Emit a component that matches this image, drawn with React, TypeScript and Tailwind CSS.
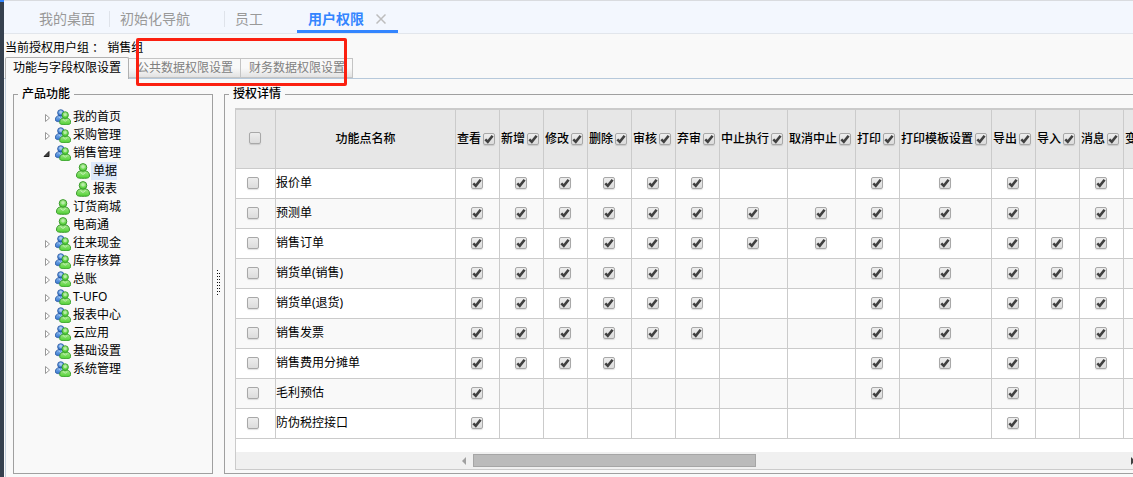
import { useState } from "react";

type TreeNode = {
  title: string;
  kind: "group" | "single";
  open?: boolean;
  children?: TreeNode[];
};

type Row = {
  name: string;
  // one char per column: 1 - checked, 0 - no such permission
  rights: string;
};

const TABS = ["我的桌面", "初始化导航", "员工", "用户权限"];

const SETTINGS = ["功能与字段权限设置", "公共数据权限设置", "财务数据权限设置"];

const TREE: TreeNode[] = [
  { title: "我的首页", kind: "group" },
  { title: "采购管理", kind: "group" },
  {
    title: "销售管理",
    kind: "group",
    open: true,
    children: [
      { title: "单据", kind: "single" },
      { title: "报表", kind: "single" },
    ],
  },
  { title: "订货商城", kind: "single" },
  { title: "电商通", kind: "single" },
  { title: "往来现金", kind: "group" },
  { title: "库存核算", kind: "group" },
  { title: "总账", kind: "group" },
  { title: "T-UFO", kind: "group" },
  { title: "报表中心", kind: "group" },
  { title: "云应用", kind: "group" },
  { title: "基础设置", kind: "group" },
  { title: "系统管理", kind: "group" },
];

const COLUMNS = [
  { title: "查看", width: "w-11" },
  { title: "新增", width: "w-11" },
  { title: "修改", width: "w-11" },
  { title: "删除", width: "w-11" },
  { title: "审核", width: "w-11" },
  { title: "弃审", width: "w-11" },
  { title: "中止执行", width: "w-17" },
  { title: "取消中止", width: "w-17" },
  { title: "打印", width: "w-11" },
  { title: "打印模板设置", width: "w-23" },
  { title: "导出", width: "w-11" },
  { title: "导入", width: "w-11" },
  { title: "消息", width: "w-11" },
  { title: "变更", width: "w-11" },
];

const ROWS: Row[] = [
  { name: "报价单", rights: "11111100111010" },
  { name: "预测单", rights: "11111111111010" },
  { name: "销售订单", rights: "11111111111110" },
  { name: "销货单(销售)", rights: "11111100111110" },
  { name: "销货单(退货)", rights: "11111100111110" },
  { name: "销售发票", rights: "11111100111010" },
  { name: "销售费用分摊单", rights: "11110000111010" },
  { name: "毛利预估", rights: "10000000101000" },
  { name: "防伪税控接口", rights: "10000000001000" },
];

function Check({ label, on = false }: { label: string; on?: boolean }) {
  return (
    <span className="relative block size-3 shrink-0">
      <input
        type="checkbox"
        aria-label={label}
        defaultChecked={on}
        className="peer block size-3 appearance-none rounded-xs border border-[#a8a8a8] bg-linear-to-b from-[#ededed] to-[#dcdcdc] shadow-[0_1px_1px_#00000020]"
      />
      <svg viewBox="0 0 12 12" className="pointer-events-none absolute inset-0 hidden size-3 peer-checked:block">
        <path d="M2.300 6.300 4.800 8.800 9.600 2.700" fill="none" stroke="#404040" strokeWidth="2.600" />
      </svg>
    </span>
  );
}

function PersonShape({ fill, line }: { fill: string; line: string }) {
  return (
    <g fill={fill} stroke={line} strokeWidth="1">
      <path d="M.5 13C.4 9.600 2.200 8.200 5 7.800h4c2.800.4 4.600 1.800 4.500 5.200-.1 1.800-1.500 2.300-6.500 2.300S.6 14.800.5 13Z" />
      <circle cx="7" cy="4.400" r="3.800" />
      <circle cx="7" cy="4" r="1.800" fill="#ffffff" fillOpacity=".45" stroke="none" />
      <path d="M4.500 9.500 7 11.500 9.500 9.500" fill="none" stroke="#ffffff" strokeOpacity=".55" />
    </g>
  );
}

function NodeIcon({ kind }: { kind: TreeNode["kind"] }) {
  if (kind === "single") {
    return (
      <svg viewBox="0 0 16 16" className="size-4 shrink-0">
        <g transform="translate(1 0)">
          <PersonShape fill="url(#green)" line="#3a9a2c" />
        </g>
      </svg>
    );
  }
  return (
    <svg viewBox="0 0 16 16" className="size-4 shrink-0">
      <g transform="translate(0 .2) scale(.82)">
        <PersonShape fill="url(#blue)" line="#1f4f9c" />
      </g>
      <g transform="translate(4.300 2.200) scale(.84 .88)">
        <PersonShape fill="url(#green)" line="#2f9a24" />
      </g>
    </svg>
  );
}

function Arrow({ open }: { open?: boolean }) {
  return (
    <svg viewBox="0 0 8 10" className="mt-0.5 h-2.5 w-2 shrink-0">
      {open ? (
        <path d="M6 2.500v5H1Z" fill="#444444" stroke="#222222" />
      ) : (
        <path d="M2.500 1.500v7l4-3.500Z" fill="#ffffff" stroke="#989898" />
      )}
    </svg>
  );
}

function Tree({ nodes, selected, onSelect }: { nodes: TreeNode[]; selected: string; onSelect: (t: string) => void }) {
  return (
    <ul>
      {nodes.map((n) => (
        <li key={n.title}>
          <div className="flex h-4.5 items-center">
            <span className="mr-1 flex w-2">{n.kind === "group" && <Arrow open={n.open} />}</span>
            <NodeIcon kind={n.kind} />
            <button
              onClick={() => onSelect(n.title)}
              className={selected === n.title ? "h-4.5 bg-[#dbe8fb] pl-0.5" : "h-4.5 pl-0.5"}
            >
              {n.title}
            </button>
          </div>
          {n.children && (
            <div className="pl-5">
              <Tree nodes={n.children} selected={selected} onSelect={onSelect} />
            </div>
          )}
        </li>
      ))}
    </ul>
  );
}

export default function App() {
  const [selected, setSelected] = useState("单据");
  const [setting, setSetting] = useState(SETTINGS[0]);

  return (
    <div className="flex min-h-screen overflow-hidden bg-[#f9f9f9] font-['Noto_Sans','Noto_Sans_CJK_SC',sans-serif] text-xs leading-[18px] text-black">
      {/* shared gradients for tree icons */}
      <svg className="absolute size-0">
        <defs>
          <linearGradient id="green" x1="0" y1="0" x2="0" y2="1">
            <stop offset="0" stopColor="#a5e88c" />
            <stop offset="1" stopColor="#4fd032" />
          </linearGradient>
          <linearGradient id="blue" x1="0" y1="0" x2="0" y2="1">
            <stop offset="0" stopColor="#8dbcf0" />
            <stop offset="1" stopColor="#2f72cc" />
          </linearGradient>
        </defs>
      </svg>

      <aside className="w-1 shrink-0 border-t-2 border-[#3385ff] bg-[#36414f]" />

      <div className="flex min-w-0 flex-1 flex-col">
        <nav className="flex h-[34px] shrink-0 items-end border-t border-b border-t-[#d9dbdf] border-b-[#e2e6ec] bg-[#f3f7fe] pl-6 text-sm text-[#999999]">
          {TABS.map((t, i) => {
            const active = t === "用户权限";
            return (
              <div
                key={t}
                className={
                  active
                    ? "flex h-7 items-center border-b-3 border-[#3385ff] pt-0.5 pr-3 pl-[11px] font-bold text-[#3385ff]"
                    : "flex h-7 items-center pb-px"
                }
              >
                {i > 0 && !active && <span className="h-4 w-px bg-[#dfe3ea]" />}
                <a href="#" className={active ? "" : i === 0 ? "pr-3.5 pl-[11px]" : "pr-8.5 pl-2.5"}>{t}</a>
                {active && (
                  <button aria-label="关闭" className="ml-3">
                    <svg viewBox="0 0 10 10" className="size-2.5">
                      <path d="M.5.5l9 9M9.500.5l-9 9" stroke="#bdbdbd" strokeWidth="1.500" />
                    </svg>
                  </button>
                )}
              </div>
            );
          })}
        </nav>

        <p className="flex h-[23px] shrink-0 gap-[3px] pt-[5px] pl-px">
          <span>当前授权用户组 ：</span>
          <span>销售组</span>
        </p>

        <div className="relative flex h-[22px] shrink-0 items-end border-b border-[#b7c9db] pl-px">
          {SETTINGS.map((s) => (
            <button
              key={s}
              onClick={() => setSetting(s)}
              className={
                s === setting
                  ? "-mb-px h-[22px] rounded-t-xs border border-b-0 border-[#b0b0b0] bg-[#f9f9f9] px-[7px] pb-0.5"
                  : "h-5 border border-l-0 border-[#c4c4c4] bg-linear-to-b from-[#f9f9f9] from-50% to-[#e2e2e2] pr-[7px] pl-2 text-[#808080]"
              }
            >
              {s}
            </button>
          ))}
          {/* marker over the data permission tabs */}
          <div className="pointer-events-none absolute -top-[19px] left-[132px] h-12 w-[211px] rounded-xs border-3 border-[#fb2010]" />
        </div>

        <main className="ml-px flex flex-1 border-l border-[#c3d0de] pt-1.5 pb-[3px] pl-[7px]">
          <fieldset className="w-[200px] shrink-0 border border-[#a0a0a0] pt-[5px] pl-[29px]">
            <legend className="-ml-[25px] px-1 font-medium">产品功能</legend>
            <Tree nodes={TREE} selected={selected} onSelect={setSelected} />
          </fieldset>

          <div className="flex w-[11px] shrink-0 items-center justify-center pt-1.5">
            <svg viewBox="0 0 3 25" className="h-[25px] w-[3px]" shapeRendering="crispEdges">
              <path d="M.5 0v25" stroke="#111111" strokeDasharray="1 2" />
              <path d="M2.500 3v20" stroke="#111111" strokeDasharray="1 2" />
            </svg>
          </div>

          <fieldset className="min-w-0 flex-1 border border-r-0 border-[#a0a0a0] pt-[5px] pb-[3px] pl-2.5">
            <legend className="-ml-1.5 px-1 font-medium">授权详情</legend>
            <div className="overflow-hidden border-t-2 border-b border-l border-[#cbcbcb] bg-white">
              <table className="w-max table-fixed border-separate border-spacing-0">
                <thead>
                  <tr className="h-[59px] bg-[#e7e7e7]">
                    <th className="w-10 border-r border-b border-[#cbcbcb] p-0 pb-0.5">
                      <div className="flex justify-center pr-0.5">
                        <Check label="全选" />
                      </div>
                    </th>
                    <th className="w-45 border-r border-b border-[#cbcbcb] p-0 font-medium">功能点名称</th>
                    {COLUMNS.map((c) => (
                      <th key={c.title} className={`${c.width} border-r border-b border-[#cbcbcb] p-0 font-medium`}>
                        <div className="flex items-center gap-0.5 pl-px whitespace-nowrap">
                          {c.title}
                          <Check label={c.title} on />
                        </div>
                      </th>
                    ))}
                  </tr>
                </thead>
                <tbody>
                  {ROWS.map((r) => (
                    <tr key={r.name} className="h-7.5 even:bg-[#f9f9f9]">
                      <td className="border-r border-b border-[#cbcbcb] p-0 pb-0.5">
                        <div className="flex justify-center pr-1.5">
                          <Check label={r.name} />
                        </div>
                      </td>
                      <td className="border-r border-b border-[#cbcbcb] p-0 pb-0.5">{r.name}</td>
                      {COLUMNS.map((c, i) => (
                        <td key={c.title} className="border-r border-b border-[#cbcbcb] p-0 pb-0.5">
                          <div className="flex justify-center pr-0.5">
                            {r.rights[i] === "1" && <Check label={`${r.name} ${c.title}`} on />}
                          </div>
                        </td>
                      ))}
                    </tr>
                  ))}
                </tbody>
              </table>

              <div className="mt-[13px] flex h-[17px] items-center bg-[#f0f0f0] pl-[225px]">
                <svg viewBox="0 0 5 8" className="h-2 w-[5px]">
                  <path d="M5 0v8L1 4Z" fill="#a0a0a0" />
                </svg>
                <div className="ml-[7px] h-[13px] w-[283px] border border-[#a6a6a6] bg-[#bbbbbb]" />
                <svg viewBox="0 0 2 8" className="ml-auto h-2 w-0.5">
                  <path d="M0 0 2 2v4L0 8Z" fill="#404040" />
                </svg>
              </div>
            </div>
          </fieldset>
        </main>
      </div>
    </div>
  );
}
